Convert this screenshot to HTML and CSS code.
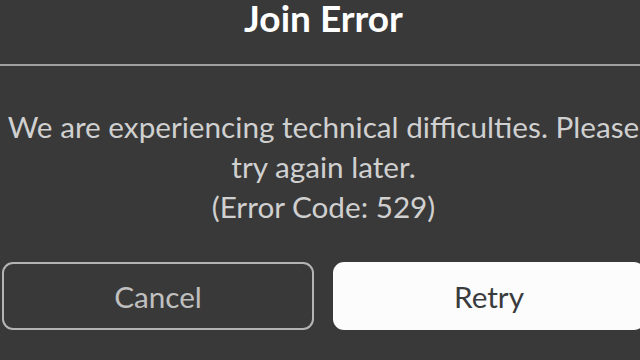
FILE: index.html
```html
<!DOCTYPE html>
<html lang="en">
<head>
<meta charset="utf-8">
<title>Join Error</title>
<link rel="stylesheet" href="styles.css">
</head>
<body>
<div class="dialog">
  <h1 class="title">Join Error</h1>
  <div class="divider"></div>
  <p class="message">We are experiencing technical difficulties. Please<br>try again later.<br>(Error Code: 529)</p>
  <div class="buttons">
    <button class="btn btn-cancel">Cancel</button>
    <button class="btn btn-retry">Retry</button>
  </div>
</div>
</body>
</html>
```
FILE: styles.css
```css
html, body {
  margin: 0;
  padding: 0;
}
body {
  width: 640px;
  height: 360px;
  overflow: hidden;
  background: #393939;
  font-family: Lato, "Open Sans", "DejaVu Sans", sans-serif;
}
.dialog {
  width: 643px;
  margin-left: 2px;
  display: flex;
  flex-direction: column;
}
.title {
  margin: 0;
  font-size: 37px;
  line-height: 36px;
  font-weight: 700;
  color: #ffffff;
  text-align: center;
}
.divider {
  margin: 28px 0 0 -2px;
  height: 2px;
  background: #a0a0a0;
}
.message {
  margin: 41px 0 0;
  font-size: 29.7px;
  line-height: 40px;
  color: #d0d0d0;
  text-align: center;
  white-space: nowrap;
}
.buttons {
  margin-top: 35px;
  display: flex;
  gap: 19px;
}
.btn {
  box-sizing: border-box;
  width: 312px;
  height: 68px;
  border-radius: 11px;
  font-family: inherit;
  font-size: 29.7px;
  padding: 0;
}
.btn-cancel {
  background: transparent;
  border: 2px solid #b4b4b4;
  color: #c0c0c0;
}
.btn-retry {
  background: #fcfcfc;
  border: 2px solid #fcfcfc;
  color: #393b3d;
}
```
